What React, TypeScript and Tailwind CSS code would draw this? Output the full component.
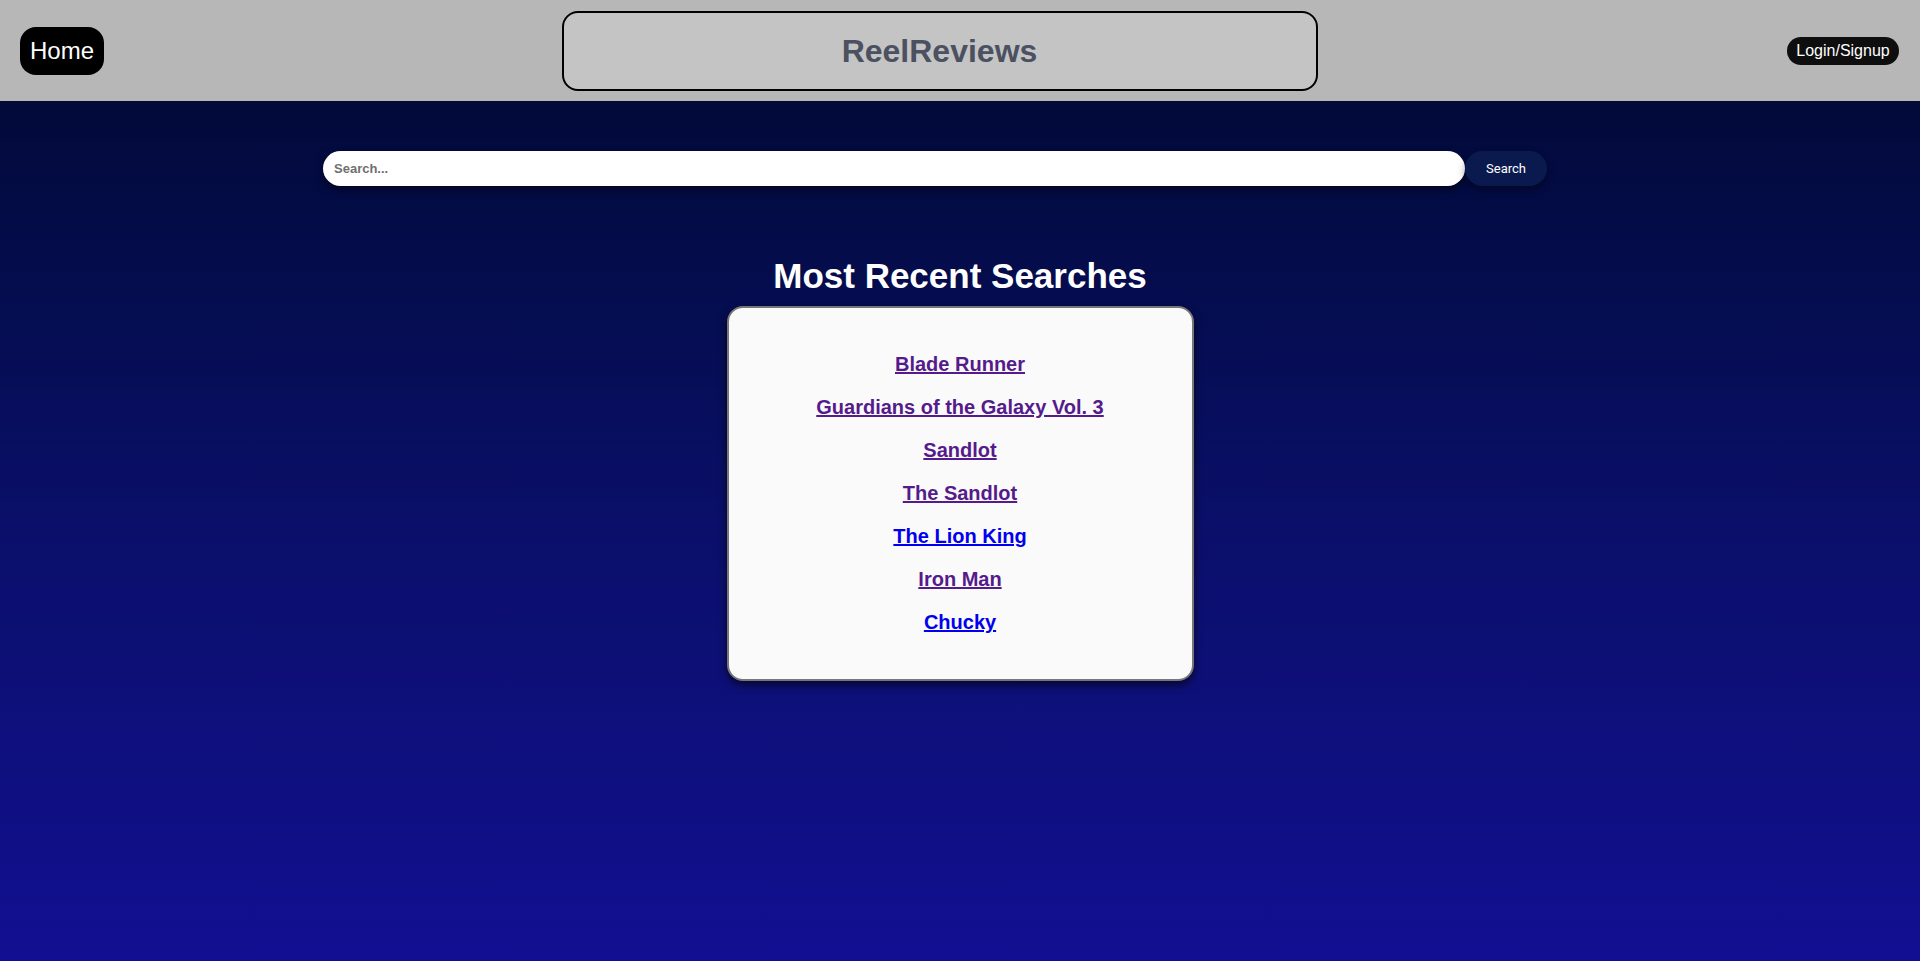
const searches = [
  { title: "Blade Runner", visited: true },
  { title: "Guardians of the Galaxy Vol. 3", visited: true },
  { title: "Sandlot", visited: true },
  { title: "The Sandlot", visited: true },
  { title: "The Lion King", visited: false },
  { title: "Iron Man", visited: true },
  { title: "Chucky", visited: false },
];

export default function App() {
  return (
    <div className="flex min-h-screen flex-col font-['Liberation_Sans',Arial,sans-serif]">
      <header className="flex h-[101px] items-center justify-between bg-[#b7b7b7] pl-5 pr-[21px]">
        <a
          href="#"
          className="flex h-12 w-[84px] items-center justify-center rounded-2xl bg-black text-2xl text-white"
        >
          Home
        </a>
        <div className="mr-[12px] flex h-[80px] w-[756px] items-center justify-center rounded-2xl border-2 border-black bg-[#c4c4c4]">
          <h1 className="text-[32px] font-bold text-[#4b5161]">ReelReviews</h1>
        </div>
        <a
          href="#"
          className="flex h-[28px] w-[112px] items-center justify-center rounded-full bg-[#0e0e0e] text-base text-white"
        >
          Login/Signup
        </a>
      </header>

      <main className="flex flex-1 flex-col bg-gradient-to-b from-[#020a3a] via-[#0b0f6a] to-[#120f92] pb-10">
        <form className="mt-[50px] flex pl-[323px]" onSubmit={(e) => e.preventDefault()}>
          <input
            type="text"
            placeholder="Search..."
            className="h-[35px] w-[1142px] rounded-full bg-white px-[11px] text-[13px] font-bold text-gray-700 shadow-[0_4px_8px_rgba(0,0,0,0.5)] outline-none placeholder:text-[#6f6f6f]"
          />
          <button
            type="submit"
            className="h-[35px] w-[82px] rounded-full bg-[#0a1a4f] font-['Roboto',sans-serif] text-[13px] text-white shadow-[0_4px_8px_rgba(0,0,0,0.4)]"
          >
            Search
          </button>
        </form>

        <h2 className="mt-[70px] text-center text-[35px] font-bold leading-[40px] text-white">
          Most Recent Searches
        </h2>

        <div className="mx-auto mt-[10px] flex w-[467px] flex-col items-center gap-5 rounded-2xl border-2 border-[#777] bg-[#fafafa] py-[45px] shadow-[0_4px_8px_rgba(0,0,0,0.6)]">
          {searches.map((s) => (
            <a
              key={s.title}
              href="#"
              className={
                "text-[20px] leading-[23px] font-bold underline " +
                (s.visited ? "text-[#551a8b]" : "text-[#0000ee]")
              }
            >
              {s.title}
            </a>
          ))}
        </div>
      </main>
    </div>
  );
}
